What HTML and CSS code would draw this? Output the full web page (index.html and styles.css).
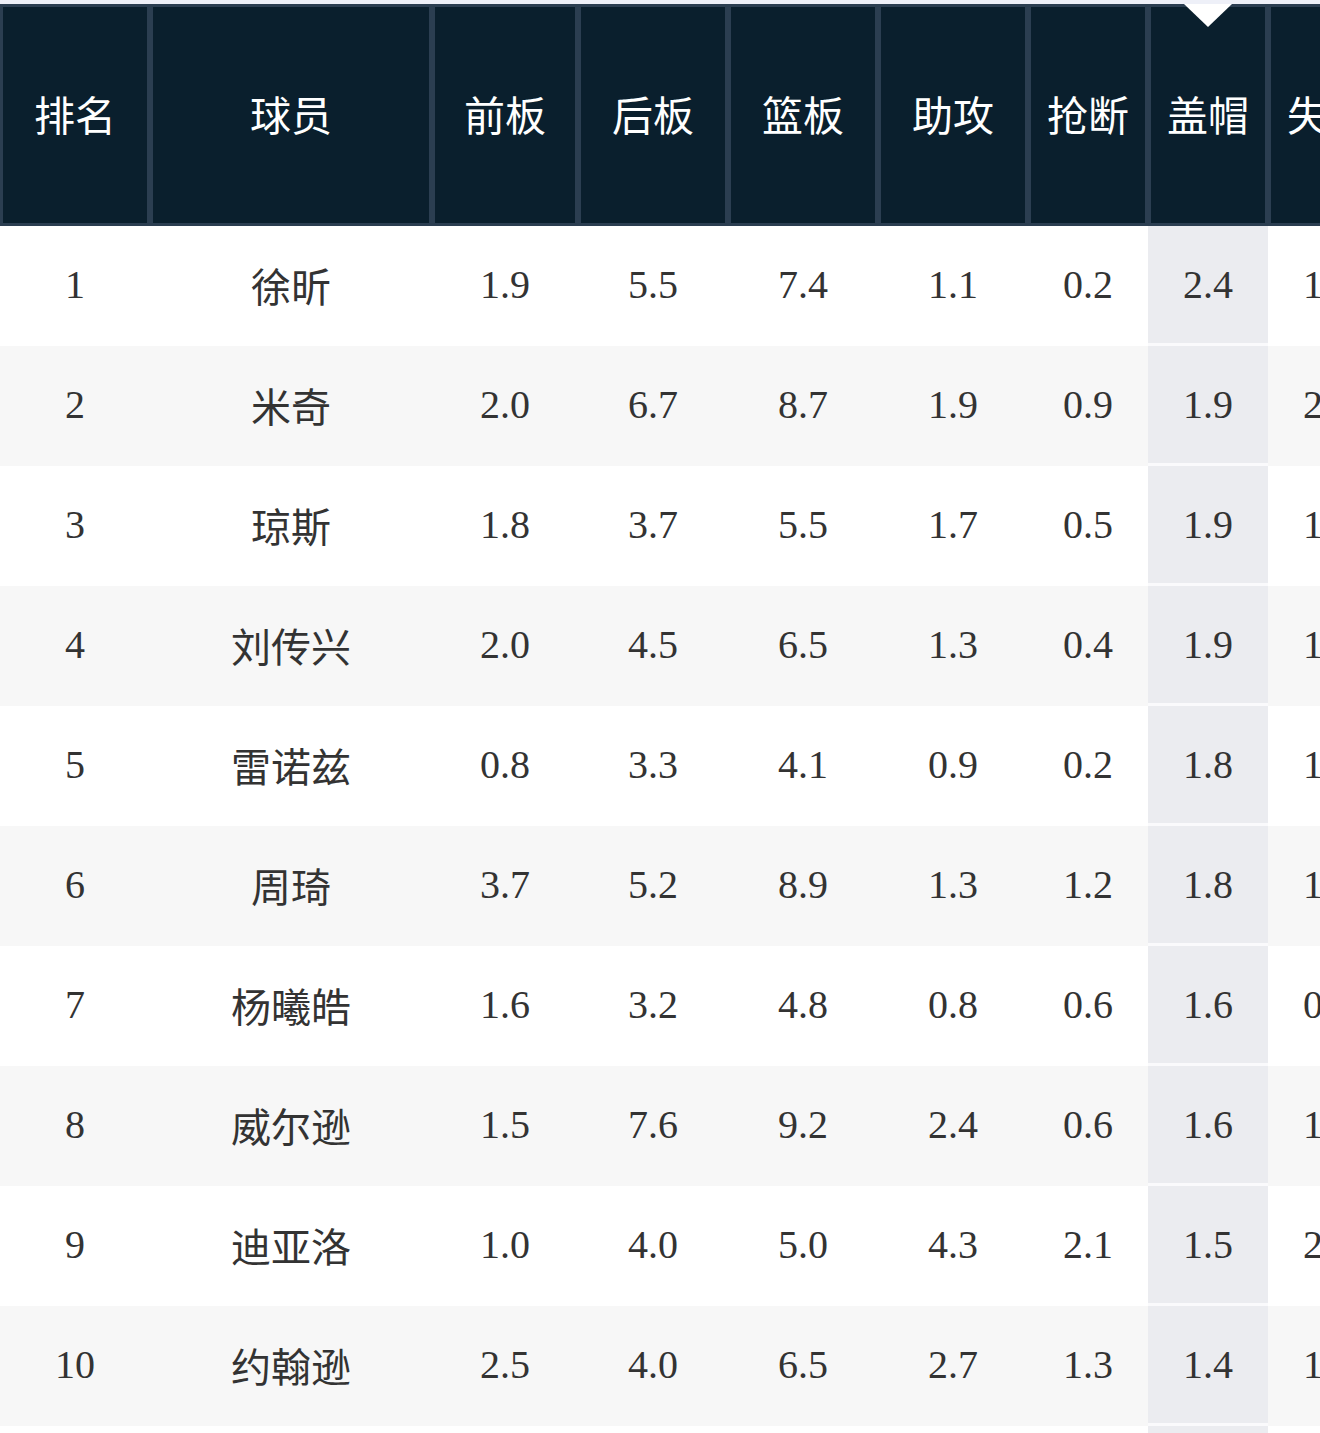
FILE: index.html
```html
<!DOCTYPE html>
<html lang="zh-CN">
<head>
<meta charset="utf-8">
<title>盖帽排行</title>
<link rel="stylesheet" href="styles.css">
</head>
<body>
<div class="page">
  <div class="scroller">
    <table class="stats">
      <colgroup>
        <col class="c-rank"><col class="c-name"><col class="c-w145"><col class="c-w150"><col class="c-w150"><col class="c-w150"><col class="c-w120"><col class="c-w120"><col class="c-w120"><col class="c-w120">
      </colgroup>
      <thead>
        <tr>
          <th>排名</th><th>球员</th><th>前板</th><th>后板</th><th>篮板</th><th>助攻</th><th>抢断</th><th class="sorted">盖帽<span class="arrow"></span></th><th>失误</th><th>犯规</th>
        </tr>
      </thead>
      <tbody>
        <tr><td>1</td><td class="name">徐昕</td><td>1.9</td><td>5.5</td><td>7.4</td><td>1.1</td><td>0.2</td><td class="hl">2.4</td><td>1.2</td><td>2.8</td></tr>
        <tr><td>2</td><td class="name">米奇</td><td>2.0</td><td>6.7</td><td>8.7</td><td>1.9</td><td>0.9</td><td class="hl">1.9</td><td>2.1</td><td>3.1</td></tr>
        <tr><td>3</td><td class="name">琼斯</td><td>1.8</td><td>3.7</td><td>5.5</td><td>1.7</td><td>0.5</td><td class="hl">1.9</td><td>1.4</td><td>2.5</td></tr>
        <tr><td>4</td><td class="name">刘传兴</td><td>2.0</td><td>4.5</td><td>6.5</td><td>1.3</td><td>0.4</td><td class="hl">1.9</td><td>1.6</td><td>3.0</td></tr>
        <tr><td>5</td><td class="name">雷诺兹</td><td>0.8</td><td>3.3</td><td>4.1</td><td>0.9</td><td>0.2</td><td class="hl">1.8</td><td>1.1</td><td>2.2</td></tr>
        <tr><td>6</td><td class="name">周琦</td><td>3.7</td><td>5.2</td><td>8.9</td><td>1.3</td><td>1.2</td><td class="hl">1.8</td><td>1.5</td><td>2.7</td></tr>
        <tr><td>7</td><td class="name">杨曦皓</td><td>1.6</td><td>3.2</td><td>4.8</td><td>0.8</td><td>0.6</td><td class="hl">1.6</td><td>0.9</td><td>2.4</td></tr>
        <tr><td>8</td><td class="name">威尔逊</td><td>1.5</td><td>7.6</td><td>9.2</td><td>2.4</td><td>0.6</td><td class="hl">1.6</td><td>1.7</td><td>3.2</td></tr>
        <tr><td>9</td><td class="name">迪亚洛</td><td>1.0</td><td>4.0</td><td>5.0</td><td>4.3</td><td>2.1</td><td class="hl">1.5</td><td>2.3</td><td>2.9</td></tr>
        <tr><td>10</td><td class="name">约翰逊</td><td>2.5</td><td>4.0</td><td>6.5</td><td>2.7</td><td>1.3</td><td class="hl">1.4</td><td>1.8</td><td>2.6</td></tr>
        <tr><td>11</td><td class="name">王哲林</td><td>2.6</td><td>6.1</td><td>8.7</td><td>1.5</td><td>0.5</td><td class="hl">1.3</td><td>2.0</td><td>2.8</td></tr>
      </tbody>
    </table>
  </div>
</div>
</body>
</html>
```

FILE: styles.css
```css
html, body {
  margin: 0;
  padding: 0;
  background: #ffffff;
}

.page {
  padding-top: 4px;
  background: #eef0f8;
  width: 1320px;
  overflow: hidden;
}

.scroller {
  width: 1320px;
  overflow: hidden;
}

.stats {
  border-collapse: separate;
  border-spacing: 0;
  table-layout: fixed;
  width: 1508px;
  background: #ffffff;
}

.c-rank { width: 150px; }
.c-name { width: 282px; }
.c-w145 { width: 146px; }
.c-w150 { width: 150px; }
.c-w120 { width: 120px; }

.stats th {
  position: relative;
  height: 222px;
  box-sizing: border-box;
  padding: 0 0 5px;
  background: #0a1f2d;
  border: 3px solid #2b3e51;
  color: #ffffff;
  font-family: "Noto Sans CJK SC", "Noto Sans", sans-serif;
  font-weight: 400;
  font-size: 41px;
  text-align: center;
  vertical-align: middle;
  white-space: nowrap;
}

.arrow {
  position: absolute;
  top: -3px;
  left: 50%;
  margin-left: -24px;
  width: 0;
  height: 0;
  border-left: 24px solid transparent;
  border-right: 24px solid transparent;
  border-top: 23px solid #ffffff;
}

.stats td {
  height: 120px;
  box-sizing: border-box;
  padding: 0;
  border-bottom: 3px solid transparent;
  text-align: center;
  vertical-align: middle;
  color: #333333;
  font-family: "Liberation Serif", "Noto Sans CJK SC", serif;
  font-size: 40px;
  white-space: nowrap;
}

.stats td.name {
  font-family: "Noto Sans CJK SC", sans-serif;
  font-size: 40px;
}

.stats tbody tr:nth-child(odd) td { background: #ffffff; }
.stats tbody tr:nth-child(even) td { background: #f7f7f7; }

.stats tbody tr td.hl {
  background: #ebecf0;
  background-clip: padding-box;
  border-bottom-color: #fafafc;
}
```
